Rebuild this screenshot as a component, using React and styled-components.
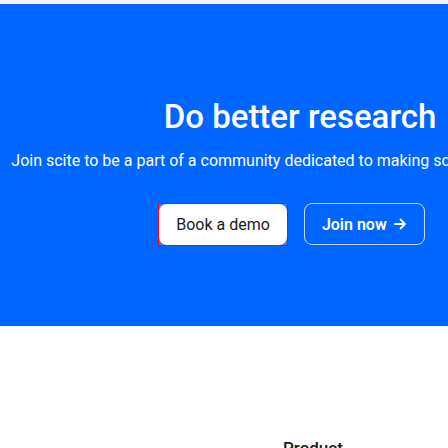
import React from "react";
import styled, { createGlobalStyle } from "styled-components";

const GlobalStyle = createGlobalStyle`
  html, body {
    margin: 0;
    padding: 0;
    background: #fff;
    overflow: hidden;
  }
  body {
    font-family: Roboto, "Liberation Sans", sans-serif;
  }
`;

const Page = styled.div`
  width: 600px;
`;

const TopStrip = styled.div`
  height: 4px;
  background: #f3f3f3;
`;

const Hero = styled.section`
  background: #0066ff;
  color: #fff;
  padding: 93px 0 80px;
  display: flex;
  flex-direction: column;
  align-items: center;
  text-align: center;
`;

const Title = styled.h1`
  margin: 0;
  font-size: 33px;
  line-height: 40px;
  font-weight: 500;
`;

const Subtitle = styled.p`
  margin: 12px 0 0;
  font-size: 16px;
  line-height: 24px;
  white-space: nowrap;
`;

const Actions = styled.div`
  display: flex;
  gap: 16px;
  margin-top: 30px;
  padding-right: 17px;
`;

const DemoLink = styled.a`
  display: block;
  border: 1px solid #ff0000;
  background: #3d7cf0;
`;

const Button = styled.button`
  display: flex;
  align-items: center;
  gap: 6px;
  height: ${(p) => (p.$outline ? "42px" : "41px")};
  padding: 0 17px;
  border-radius: 8px;
  font-family: Roboto, "Liberation Sans", sans-serif;
  font-size: 16px;
  font-weight: ${(p) => (p.$outline ? 600 : 400)};
  cursor: pointer;
  background: ${(p) => (p.$outline ? "transparent" : "#fff")};
  color: ${(p) => (p.$outline ? "#fff" : "#1b1b1b")};
  border: ${(p) => (p.$outline ? "1px solid rgba(255,255,255,0.75)" : "none")};
`;

const Footer = styled.footer`
  padding: 110px 0 40px 283px;
`;

const ColumnTitle = styled.h3`
  margin: 0;
  font-size: 17px;
  line-height: 24px;
  font-weight: 500;
  color: #1b1b1b;
`;

const Arrow = () => (
  <svg width="14" height="14" viewBox="0 0 14 14" fill="none" stroke="#fff" strokeWidth="1.8" strokeLinecap="round" strokeLinejoin="round">
    <path d="M2 7h10M7.5 2.5 12 7l-4.5 4.5" />
  </svg>
);

export default function App() {
  return (
    <Page>
      <GlobalStyle />
      <TopStrip />
      <Hero>
        <Title>Do better research</Title>
        <Subtitle>Join scite to be a part of a community dedicated to making science more reliable.</Subtitle>
        <Actions>
          <DemoLink>
            <Button>Book a demo</Button>
          </DemoLink>
          <Button $outline>
            Join now <Arrow />
          </Button>
        </Actions>
      </Hero>
      <Footer>
        <ColumnTitle>Product</ColumnTitle>
      </Footer>
    </Page>
  );
}
